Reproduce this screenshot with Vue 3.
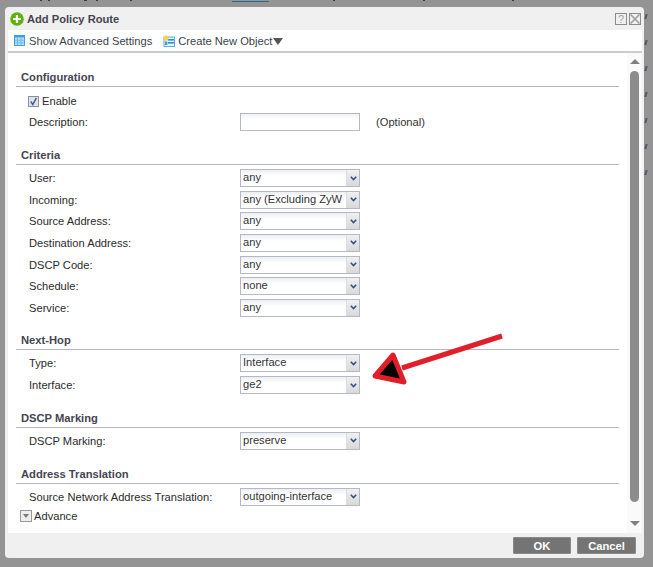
<script setup>
const topMarks = [[40,2],[48,2],[84,3],[96,2],[130,2],[333,2],[423,2],[512,2]]
const sideMarks = [14,40,66,92,118,144,170]

const sections = [
  { title: 'Criteria', cls: 'criteria', rows: [
    ['User:', 'any'], ['Incoming:', 'any (Excluding ZyW'], ['Source Address:', 'any'],
    ['Destination Address:', 'any'], ['DSCP Code:', 'any'], ['Schedule:', 'none'], ['Service:', 'any']
  ]},
  { title: 'Next-Hop', cls: 'nexthop', rows: [['Type:', 'Interface'], ['Interface:', 'ge2']] },
  { title: 'DSCP Marking', cls: 'marking', rows: [['DSCP Marking:', 'preserve']] },
  { title: 'Address Translation', cls: 'translation', rows: [['Source Network Address Translation:', 'outgoing-interface']] }
]
</script>

<template>
  <div class="page">
    <span v-for="m in topMarks" :key="m[0]" class="top-mark" :style="{ left: m[0] + 'px', width: m[1] + 'px' }"></span>
    <span class="top-link"></span>
    <span v-for="y in sideMarks" :key="y" class="side-mark" :style="{ top: y + 'px' }"></span>

    <div class="dialog">
      <header class="titlebar">
        <svg class="plus" width="14" height="14" viewBox="0 0 14 14">
          <circle cx="7" cy="7" r="6.8" fill="#5cb30e" />
          <path d="M7 3v8M3 7h8" stroke="#fff" stroke-width="2.2" />
        </svg>
        <span class="title">Add Policy Route</span>
        <span class="win-btn">
          <svg width="10" height="10" viewBox="0 0 10 10"><text x="5" y="9" text-anchor="middle" font-size="11" fill="#a3a3a3" font-family="Liberation Sans, sans-serif">?</text></svg>
        </span>
        <span class="win-btn">
          <svg width="10" height="10" viewBox="0 0 10 10"><path d="M.5.5l9 9M9.5.5l-9 9" stroke="#9c9c9c" stroke-width="1.5" fill="none" /></svg>
        </span>
      </header>

      <div class="body">
        <div class="toolbar">
          <span class="tool">
            <svg width="11" height="11" viewBox="0 0 11 11">
              <rect x=".5" y=".5" width="10" height="10" fill="#bfe0f7" stroke="#3da0e3" />
              <rect x="0" y="0" width="11" height="2.5" fill="#39a0e6" />
              <path d="M3.5 3v7M7 3v7M1 5.2h9M1 7.8h9" stroke="#6fb8ea" stroke-width="1" />
            </svg>
            Show Advanced Settings
          </span>
          <span class="tool create">
            <svg width="12" height="12" viewBox="0 0 12 12">
              <rect x="1" y="2" width="10.5" height="9.5" fill="#e6f3fb" stroke="#55aee8" />
              <rect x="5" y="4" width="6" height="1.6" fill="#2e8fd8" />
              <rect x="5" y="7" width="6" height="1.6" fill="#2e8fd8" />
              <rect x="2" y="6.5" width="2.4" height="3.5" fill="#3f9fe0" />
              <circle cx="3" cy="3" r="2.6" fill="#f6d34a" />
            </svg>
            Create New Object<span class="caret"></span>
          </span>
        </div>

        <div class="content">
          <div class="form">
            <section class="section configuration">
              <h3>Configuration</h3>
              <label class="enable">
                <span class="check">
                  <svg width="9" height="9" viewBox="0 0 9 9"><path d="M1.8 4.5l2 3L7.4.8" stroke="#4a5f96" stroke-width="1.5" fill="none" /></svg>
                </span>
                Enable
              </label>
              <div class="row desc">
                <span class="label">Description:</span>
                <span class="input"></span>
                <span class="hint">(Optional)</span>
              </div>
            </section>

            <section v-for="s in sections" :key="s.title" class="section" :class="s.cls">
              <h3>{{ s.title }}</h3>
              <div class="rows">
                <div v-for="r in s.rows" :key="r[0]" class="row">
                  <span class="label">{{ r[0] }}</span>
                  <span class="select">
                    <span class="value">{{ r[1] }}</span>
                    <span class="drop">
                      <svg width="7" height="5" viewBox="0 0 7 5"><path d="M.8.8L3.5 3.5 6.2.8" stroke="#34508c" stroke-width="1.6" fill="none" /></svg>
                    </span>
                  </span>
                </div>
              </div>
            </section>

            <div class="advance">
              <span class="adv-box"><i></i></span>
              Advance
            </div>
          </div>

          <div class="scroll">
            <span class="arrow-up"></span>
            <span class="thumb"></span>
            <span class="arrow-down"></span>
          </div>
        </div>
      </div>

      <footer class="footer">
        <button class="btn ok">OK</button>
        <button class="btn cancel">Cancel</button>
      </footer>
    </div>

    <svg class="red-arrow" width="653" height="567" viewBox="0 0 653 567">
      <path d="M502 336L402 368" stroke="#e11f2a" stroke-width="5" fill="none" />
      <path d="M393 355L375 376 404 382Z" fill="#000" stroke="#e11f2a" stroke-width="5" stroke-linejoin="round" />
    </svg>
  </div>
</template>

<style>
html, body { margin: 0; background: #949494; }
</style>

<style scoped>
.page {
  position: relative;
  width: 653px;
  height: 567px;
  box-sizing: border-box;
  padding: 7px 9px 9px 5px;
  overflow: hidden;
  background: #949494;
  font-family: "Liberation Sans", Arial, sans-serif;
  font-size: 11.15px;
  color: #2b2b2b;
}
.top-mark { position: absolute; top: 0; height: 1px; background: #3c3a45; }
.top-link { position: absolute; top: 1px; left: 232px; width: 37px; height: 1px; background: #2b6f86; }
.side-mark { position: absolute; left: 645px; width: 2px; height: 5px; background: #50586c; transform: skewX(-15deg); }

.dialog {
  height: 551px;
  background: #f0f0f0;
  border-radius: 4px;
  display: flex;
  flex-direction: column;
}
.titlebar {
  height: 23px;
  flex: none;
  display: flex;
  align-items: center;
  padding: 0 3px 0 5px;
  gap: 2px;
}
.plus { margin: 1px 1px 0 0; }
.title { flex: 1; font-weight: bold; color: #444450; }
.win-btn {
  width: 10px;
  height: 10px;
  margin-top: 1px;
  border: 1px solid #8c8c8c;
  display: flex;
  align-items: center;
  justify-content: center;
  overflow: hidden;
}
.body {
  margin: 0 2px 0 3px;
  height: 503px;
  flex: none;
  background: #fff;
  display: flex;
  flex-direction: column;
}
.toolbar {
  height: 21px;
  flex: none;
  display: flex;
  align-items: center;
  gap: 11px;
  padding-left: 6px;
  border-bottom: 2px solid #cccccc;
  color: #3b3f4c;
}
.tool { display: flex; align-items: center; gap: 4px; }
.create { gap: 3px; }
.caret {
  margin-left: -2px;
  margin-top: 1px;
  border-left: 5px solid transparent;
  border-right: 5px solid transparent;
  border-top: 7px solid #555;
}
.content { flex: 1; display: flex; min-height: 0; }
.form { flex: 1; padding: 17px 0 0 8px; }
.section { width: 603px; }
.section h3 {
  margin: 0;
  height: 16px;
  line-height: 14px;
  font-size: 11.2px;
  font-weight: bold;
  color: #454552;
  padding-left: 5px;
  border-bottom: 1px solid #b5b5bb;
  box-sizing: content-box;
}
.criteria { margin-top: 17px; }
.nexthop { margin-top: 16.6px; }
.marking { margin-top: 16.9px; }
.translation { margin-top: 17px; }

.enable {
  display: flex;
  align-items: center;
  gap: 3px;
  height: 16px;
  margin: 6px 0 0 12px;
}
.check {
  width: 9px;
  height: 9px;
  border: 1px solid #8f8f9c;
  background: #dfe3ec;
  display: flex;
}
.rows {
  display: flex;
  flex-direction: column;
  gap: 3.65px;
  margin-top: 4px;
}
.row {
  height: 18px;
  display: flex;
  align-items: center;
  padding-left: 13px;
}
.desc { margin-top: 4px; }
.label { width: 211px; flex: none; }
.input {
  width: 118px;
  height: 16px;
  border: 1px solid #b5b8c8;
  background: linear-gradient(#eef0f5, #fff 5px);
}
.hint { margin-left: 16px; color: #333; }
.select {
  width: 118px;
  height: 16px;
  border: 1px solid #b5b8c8;
  display: flex;
  background: linear-gradient(#eceef3, #fff 6px);
}
.value {
  flex: 1;
  padding-left: 2px;
  line-height: 15px;
  white-space: nowrap;
  overflow: hidden;
  color: #333;
}
.drop {
  width: 12px;
  flex: none;
  display: flex;
  align-items: center;
  justify-content: center;
  background: linear-gradient(#f0f0f0, #d9d9d9);
  border-left: 1px solid #dcdcdc;
}
.advance {
  display: flex;
  align-items: center;
  gap: 2px;
  height: 14px;
  margin: 3px 0 0 4px;
}
.adv-box {
  width: 10px;
  height: 10px;
  border: 1px solid #9a9a9a;
  background: #eee;
  display: flex;
  align-items: center;
  justify-content: center;
}
.adv-box i {
  border-left: 3px solid transparent;
  border-right: 3px solid transparent;
  border-top: 4px solid #7a7a7a;
}
.scroll {
  width: 15px;
  flex: none;
  background: #fafafa;
  display: flex;
  flex-direction: column;
  align-items: flex-start;
  padding: 6px 0 0 3px;
  box-sizing: border-box;
}
.arrow-up {
  border-left: 5px solid transparent;
  border-right: 5px solid transparent;
  border-bottom: 5px solid #808080;
}
.thumb {
  width: 9px;
  height: 431px;
  margin: 7px 0 19px;
  background: #8c8c8c;
  border-radius: 5px;
}
.arrow-down {
  border-left: 5px solid transparent;
  border-right: 5px solid transparent;
  border-top: 5px solid #808080;
}
.footer {
  flex: 1;
  display: flex;
  justify-content: flex-end;
  align-items: center;
  gap: 6px;
  padding-right: 8px;
}
.btn {
  height: 17px;
  padding: 0;
  border: 1px solid #8a8a8a;
  background: #747474;
  color: #fff;
  font: bold 11.2px "Liberation Sans", Arial, sans-serif;
  border-radius: 1px;
}
.ok { width: 58px; }
.cancel { width: 59px; }
.red-arrow { position: absolute; left: 0; top: 0; pointer-events: none; }
</style>
